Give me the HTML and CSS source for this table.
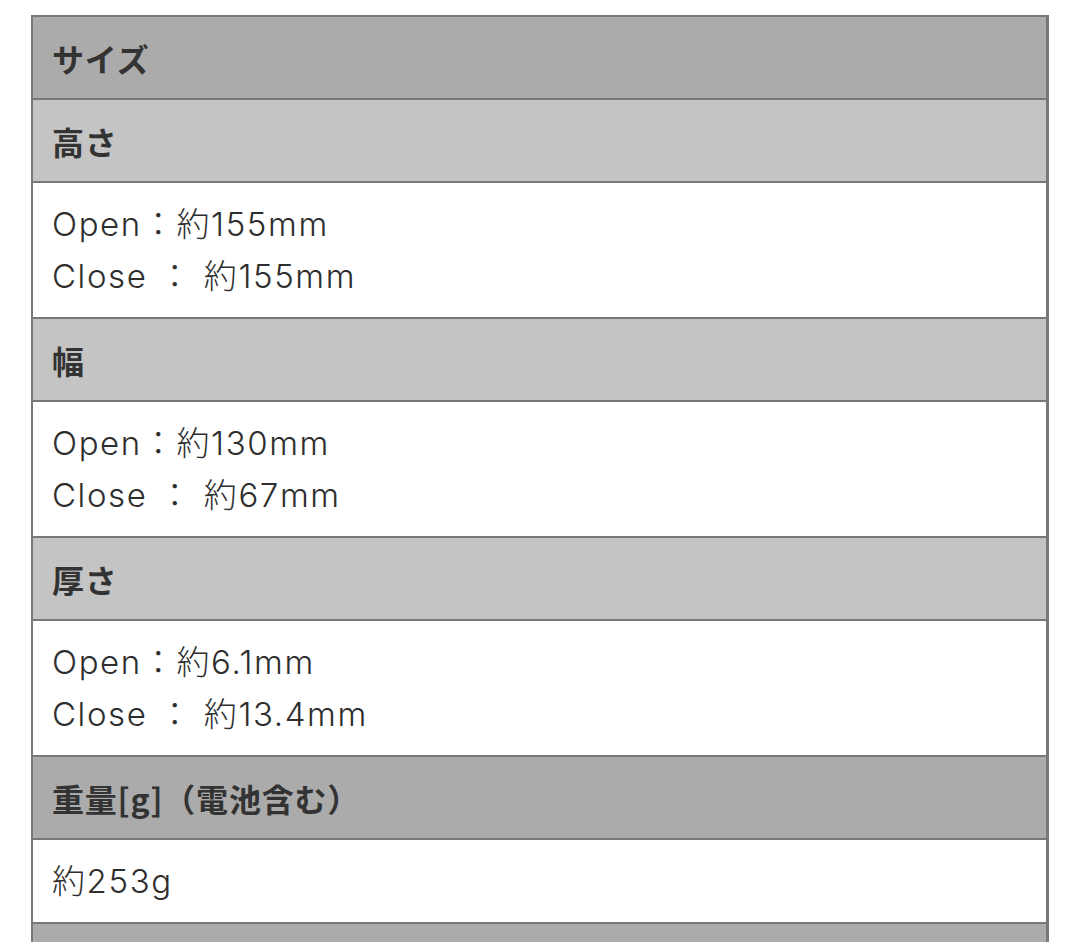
FILE: index.html
```html
<!DOCTYPE html>
<html lang="ja">
<head>
<meta charset="utf-8">
<link rel="stylesheet" href="styles.css">
</head>
<body>
<div class="page">
  <div class="spec">
    <div class="row head">サイズ</div>
    <div class="row sub">高さ</div>
    <div class="row cell">Open：約155mm<br>Close ： 約155mm</div>
    <div class="row sub">幅</div>
    <div class="row cell">Open：約130mm<br>Close ： 約67mm</div>
    <div class="row sub">厚さ</div>
    <div class="row cell">Open：約6.1mm<br>Close ： 約13.4mm</div>
    <div class="row head">重量[g]（電池含む）</div>
    <div class="row cell">約253g</div>
    <div class="row head">&nbsp;</div>
  </div>
</div>
</body>
</html>
```
FILE: styles.css
```css
html, body {
  margin: 0;
  padding: 0;
  background: #ffffff;
}
.page {
  padding: 15px 31px 0 31px;
}
.spec {
  width: 1013px;
  border-left: 2px solid #787878;
  border-top: 2px solid #787878;
  border-right: 3px solid #787878;
  display: flex;
  flex-direction: column;
  font-family: "Inter", "Noto Sans CJK JP", sans-serif;
  color: #333333;
}
.row {
  padding: 15px 18px 15px 19px;
  font-size: 32px;
  line-height: 52px;
  border-bottom: 2px solid #787878;
}
.head,
.sub {
  padding-bottom: 14px;
  font-weight: bold;
  font-family: "Noto Sans CJK JP", sans-serif;
  letter-spacing: 0.8px;
}
.head {
  background: #ababab;
}
.sub {
  background: #c4c4c4;
}
.cell {
  background: #ffffff;
  font-size: 33px;
  font-weight: 300;
  letter-spacing: 1.6px;
  color: #2e2e2e;
}
```
